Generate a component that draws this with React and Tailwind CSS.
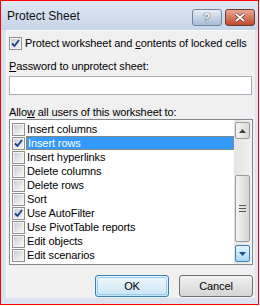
import React from "react";

const items = [
  { label: "Insert columns", checked: false },
  { label: "Insert rows", checked: true, selected: true },
  { label: "Insert hyperlinks", checked: false },
  { label: "Delete columns", checked: false },
  { label: "Delete rows", checked: false },
  { label: "Sort", checked: false },
  { label: "Use AutoFilter", checked: true },
  { label: "Use PivotTable reports", checked: false },
  { label: "Edit objects", checked: false },
  { label: "Edit scenarios", checked: false },
];

const CheckBox = ({ checked }) => (
  <div className="w-[13px] h-[13px] shrink-0 border border-[#8e8f8f] bg-[#f4f4f4] p-[1px]">
    <div className="w-full h-full bg-gradient-to-br from-[#cbcfd5] to-[#f6f6f6] flex items-center justify-center">
      {checked && (
        <svg width="9" height="9" viewBox="0 0 9 9">
          <path d="M1 4.5 L3.5 7 L8 1" fill="none" stroke="#1c3c8c" strokeWidth="1.8" />
        </svg>
      )}
    </div>
  </div>
);

export default function App() {
  return (
    <div className="w-[260px] h-[306px] bg-white" style={{ fontFamily: "'Liberation Sans', Arial, sans-serif" }}>
      <div className="w-[259px] h-[305px] border border-[#ff0000] bg-[#d9e2ee] flex flex-col">
        {/* title bar */}
        <div className="h-[29px] shrink-0 flex items-start bg-gradient-to-b from-[#dfe8f3] to-[#c6d5e7] pl-[6px] pr-[3px]">
          <div className="mt-[8px] text-[12px] leading-[14px] text-[#111]">Protect Sheet</div>
          <div className="ml-auto mt-[8px] flex gap-[3px]">
            <div className="w-[30px] h-[17px] rounded-[3px] border border-[#71829b] bg-gradient-to-b from-[#e6edf6] to-[#a9bdd6] flex items-center justify-center">
              <span className="text-[12px] font-bold leading-none text-white" style={{ textShadow: "0 0 1px #334, 0 0 1px #334" }}>?</span>
            </div>
            <div className="w-[30px] h-[17px] rounded-[3px] border border-[#6b3b33] bg-gradient-to-b from-[#e9a695] to-[#c0462d] flex items-center justify-center">
              <svg width="12" height="9" viewBox="0 0 12 9">
                <path d="M2 1 L10 8 M10 1 L2 8" stroke="#4a2018" strokeWidth="3" />
                <path d="M2 1 L10 8 M10 1 L2 8" stroke="#fff" strokeWidth="2" />
              </svg>
            </div>
          </div>
        </div>

        {/* content */}
        <div className="flex-1 flex pl-[5px] pr-[3px] pb-[6px]">
          <div className="flex-1 bg-[#f0f0f0] border-t border-l border-[#fafafa] pl-[2px] pr-[1px] flex flex-col text-[11px] tracking-[-0.1px] text-black">
            <div className="mt-[6px] flex items-center h-[13px]">
              <CheckBox checked />
              <span className="ml-[3px] leading-[13px]">
                Protect worksheet and <span className="underline">c</span>ontents of locked cells
              </span>
            </div>

            <div className="mt-[10px] leading-[13px]">
              <span className="underline">P</span>assword to unprotect sheet:
            </div>
            <div className="mt-[3px] h-[19px] w-[243px] border border-[#abadb3] bg-white" />

            <div className="mt-[11px] leading-[13px]">
              Allo<span className="underline">w</span> all users of this worksheet to:
            </div>

            <div className="h-[146px] w-[244px] border border-[#828790] bg-white flex">
              <div className="flex-1 pt-[2px] pl-[2px]">
                {items.map((it) => (
                  <div key={it.label} className="h-[14px] flex items-center">
                    <CheckBox checked={it.checked} />
                    <div
                      className={
                        it.selected
                          ? "ml-[1px] flex-1 h-[14px] pl-[1px] leading-[12px] bg-[#3399ff] text-white border border-dotted border-[#d07a20]"
                          : "ml-[2px] leading-[14px]"
                      }
                    >
                      {it.label}
                    </div>
                  </div>
                ))}
              </div>

              {/* scrollbar */}
              <div className="w-[18px] shrink-0 bg-gradient-to-r from-[#e3e3e5] to-[#f2f2f2] flex flex-col items-start pt-[2px] pb-[2px] pl-[1px]">
                <div className="w-[15px] h-[17px] rounded-[2px] border border-[#9a9a9a] bg-gradient-to-r from-[#f4f4f4] to-[#d9d9d9] flex items-center justify-center">
                  <svg width="7" height="4" viewBox="0 0 7 4">
                    <path d="M0 4 L3.5 0 L7 4 Z" fill="#404040" />
                  </svg>
                </div>
                <div className="h-[36px]" />
                <div className="w-[15px] h-[67px] rounded-[2px] border border-[#9a9a9a] bg-gradient-to-r from-[#f4f4f4] to-[#d4d4d4] flex flex-col items-center justify-center gap-[2px]">
                  <div className="w-[7px] h-[1px] bg-[#555]" />
                  <div className="w-[7px] h-[1px] bg-[#555]" />
                  <div className="w-[7px] h-[1px] bg-[#555]" />
                </div>
                <div className="flex-1" />
                <div className="w-[15px] h-[17px] rounded-[2px] border border-[#3c7fb1] bg-gradient-to-b from-[#e5f4fc] to-[#a7d9f5] flex items-center justify-center">
                  <svg width="7" height="4" viewBox="0 0 7 4">
                    <path d="M0 0 L7 0 L3.5 4 Z" fill="#1a4e82" />
                  </svg>
                </div>
              </div>
            </div>

            <div className="mt-[10px] flex justify-end gap-[10px] w-[244px]">
              <button className="w-[74px] h-[22px] rounded-[3px] border border-[#3c7fb1] bg-gradient-to-b from-[#f0f7fb] to-[#c9e3f3] text-[11px] text-black p-[1px]">
                <div className="w-full h-full rounded-[2px] border border-[#8fd1f3] flex items-center justify-center">OK</div>
              </button>
              <button className="w-[74px] h-[22px] rounded-[3px] border border-[#707070] bg-gradient-to-b from-[#f2f2f2] to-[#d4d4d4] text-[11px] text-black flex items-center justify-center">
                Cancel
              </button>
            </div>
          </div>
        </div>
      </div>
    </div>
  );
}
